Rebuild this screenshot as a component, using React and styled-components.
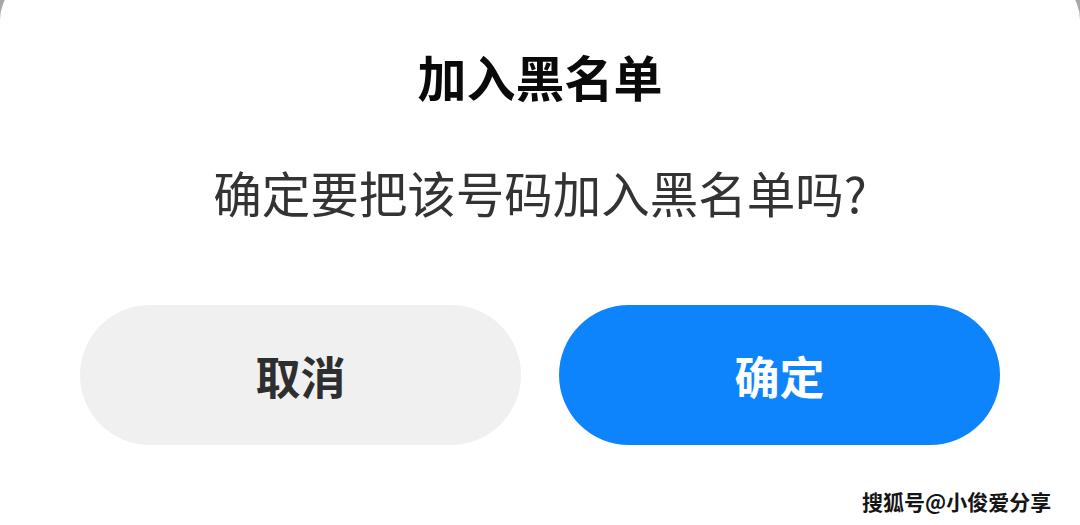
import React from "react";
import styled, { createGlobalStyle } from "styled-components";

const GlobalStyle = createGlobalStyle`
  html, body {
    margin: 0;
    padding: 0;
    width: 1080px;
    height: 525px;
    overflow: hidden;
    background: #a8a8a8;
    font-family: "Noto Sans CJK SC", "Noto Sans", sans-serif;
  }
  #root {
    width: 1080px;
    height: 525px;
  }
`;

const Screen = styled.div`
  position: relative;
  width: 1080px;
  height: 525px;
  overflow: hidden;
`;

/* The sheet runs past the bottom edge, so only its top corners show */
const Dialog = styled.div`
  margin-top: -24px;
  height: 620px;
  background: #ffffff;
  border-radius: 44px;
  display: flex;
  flex-direction: column;
  align-items: center;
  padding-top: 70px;
  box-sizing: border-box;
`;

const Title = styled.h2`
  margin: 0;
  font-size: 49px;
  line-height: 60px;
  font-weight: 700;
  color: #0a0a0a;
`;

const Message = styled.p`
  margin: 56px 0 0;
  font-size: 48.5px;
  line-height: 60px;
  font-weight: 400;
  color: #333333;
`;

const Actions = styled.div`
  margin-top: 83px;
  width: 100%;
  box-sizing: border-box;
  padding: 0 80px;
  display: flex;
  gap: 38px;
`;

const ActionButton = styled.button`
  flex: 1;
  height: 140px;
  border: none;
  border-radius: 70px;
  font-family: inherit;
  font-size: 45px;
  font-weight: 700;
  background: ${(p) => (p.$primary ? "#0d84fc" : "#f0f0f0")};
  color: ${(p) => (p.$primary ? "#ffffff" : "#2e2e2e")};
  cursor: pointer;
  display: flex;
  align-items: center;
  justify-content: center;
`;

const Watermark = styled.span`
  position: absolute;
  left: 862px;
  bottom: 12px;
  font-size: 21px;
  line-height: 24px;
  font-weight: 700;
  color: #151515;
  text-shadow: 1px 1px 0 #ffffff, -1px -1px 0 #ffffff, 1px -1px 0 #ffffff,
    -1px 1px 0 #ffffff;
`;

export default function App() {
  return (
    <>
      <GlobalStyle />
      <Screen>
        <Dialog>
          <Title>加入黑名单</Title>
          <Message>确定要把该号码加入黑名单吗?</Message>
          <Actions>
            <ActionButton>取消</ActionButton>
            <ActionButton $primary>确定</ActionButton>
          </Actions>
        </Dialog>
        <Watermark>搜狐号@小俊爱分享</Watermark>
      </Screen>
    </>
  );
}
